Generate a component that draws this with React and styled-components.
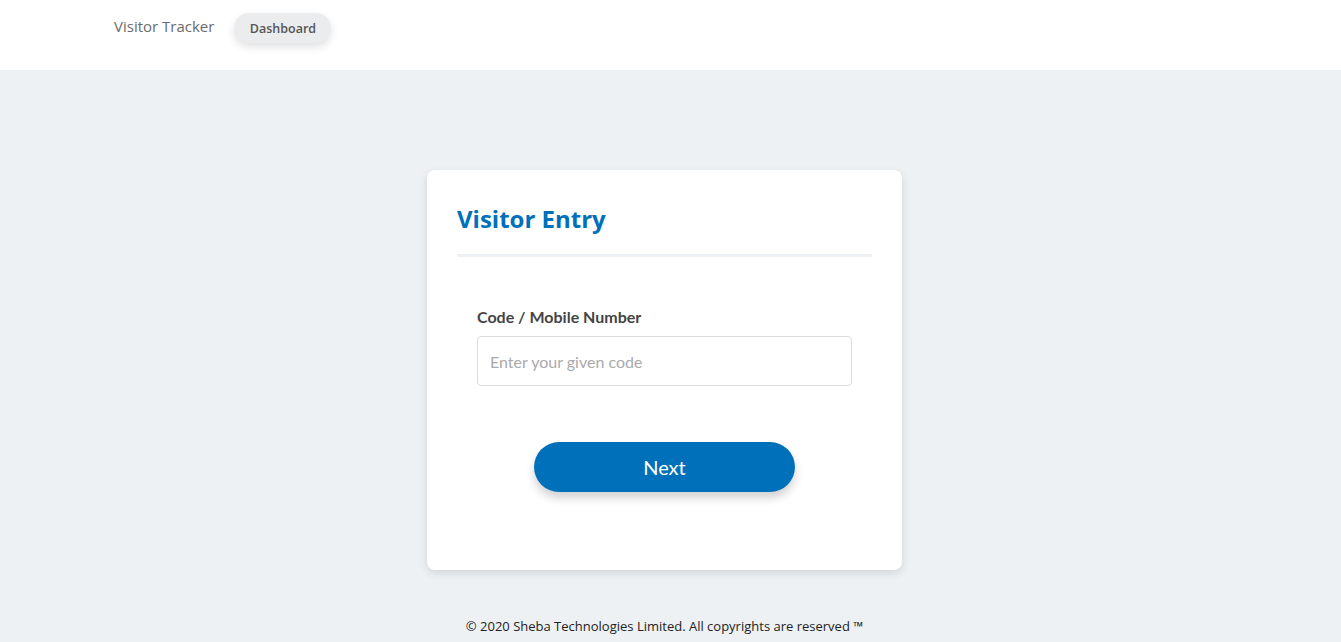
import React from 'react';
import styled, { createGlobalStyle } from 'styled-components';

const GlobalStyle = createGlobalStyle`
	html, body {
		margin: 0;
		padding: 0;
		background: #eef1f4;
	}
	body {
		font-family: 'Open Sans', 'Liberation Sans', sans-serif;
	}
	* {
		box-sizing: border-box;
	}
`;

const Page = styled.div`
	min-height: 642px;
	display: flex;
	flex-direction: column;
`;

const Header = styled.header`
	height: 70px;
	background: #ffffff;
	display: flex;
	align-items: flex-start;
	padding: 15px 0 0 114px;
	gap: 20px;
`;

const Brand = styled.div`
	font-size: 15px;
	color: #6b6b6b;
	line-height: 22px;
`;

const NavPill = styled.button`
	margin-top: -2px;
	height: 30px;
	width: 97px;
	padding: 0;
	border: none;
	border-radius: 15px;
	background: #ebecee;
	color: #555;
	font-family: 'Open Sans', sans-serif;
	font-size: 12.5px;
	font-weight: 600;
	box-shadow: 0 4px 8px rgba(0, 0, 0, 0.12);
`;

const Main = styled.main`
	display: flex;
	justify-content: center;
	padding: 100px 12px 0 0;
`;

const Card = styled.div`
	width: 475px;
	height: 400px;
	background: #fff;
	border-radius: 8px;
	box-shadow: 0 3px 8px rgba(0, 0, 0, 0.12);
	padding: 30px 30px 0;
`;

const Title = styled.h2`
	margin: 0;
	font-size: 24px;
	font-weight: 700;
	color: #0070ba;
	line-height: 38px;
	padding-bottom: 16px;
	border-bottom: 3px solid #edf1f5;
`;

const Form = styled.div`
	padding: 50px 20px 0;
	display: flex;
	flex-direction: column;
`;

const Label = styled.label`
	font-family: Lato, sans-serif;
	font-size: 16px;
	font-weight: 700;
	color: #444;
	line-height: 20px;
	margin-bottom: 9px;
`;

const Input = styled.input`
	height: 50px;
	width: 100%;
	border: 1px solid #dcdcdc;
	border-radius: 4px;
	padding: 0 12px;
	font-family: Lato, sans-serif;
	font-size: 16px;
	outline: none;

	&::placeholder {
		color: #aaa;
	}
`;

const NextButton = styled.button`
	align-self: center;
	margin-top: 56px;
	width: 261px;
	height: 50px;
	border: none;
	border-radius: 25px;
	background: #0070ba;
	color: #fff;
	font-family: Lato, sans-serif;
	font-size: 20px;
	box-shadow: 0 6px 10px rgba(0, 0, 0, 0.18);
`;

const Footer = styled.footer`
	margin-top: 47px;
	padding-right: 12px;
	text-align: center;
	font-size: 13px;
	color: #222;
`;

const App = () => {
	return (
		<Page>
			<GlobalStyle />
			<Header>
				<Brand>Visitor Tracker</Brand>
				<NavPill>Dashboard</NavPill>
			</Header>
			<Main>
				<Card>
					<Title>Visitor Entry</Title>
					<Form>
						<Label>Code / Mobile Number</Label>
						<Input placeholder='Enter your given code' />
						<NextButton>Next</NextButton>
					</Form>
				</Card>
			</Main>
			<Footer>© 2020 Sheba Technologies Limited. All copyrights are reserved ™</Footer>
		</Page>
	);
};

export default App;
